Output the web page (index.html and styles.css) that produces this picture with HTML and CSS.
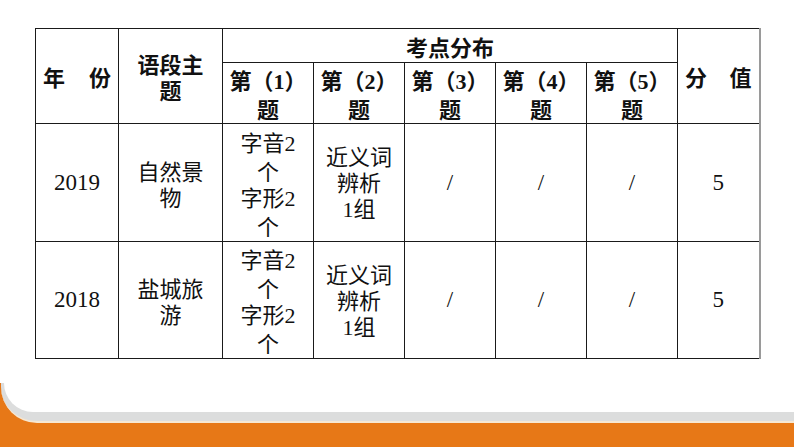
FILE: index.html
```html
<!DOCTYPE html>
<html lang="zh-CN">
<head>
<meta charset="utf-8">
<title>考点分布</title>
<link rel="stylesheet" href="styles.css">
</head>
<body>
<div class="page">
  <div class="sheet">
    <table class="grid">
      <colgroup>
        <col class="c-year"><col class="c-theme"><col class="c-q"><col class="c-q"><col class="c-q"><col class="c-q"><col class="c-q"><col class="c-score">
      </colgroup>
      <thead>
        <tr class="h1">
          <th rowspan="2"><span class="spread"><span>年</span><span>份</span></span></th>
          <th rowspan="2">语段主<br>题</th>
          <th colspan="5">考点分布</th>
          <th rowspan="2" class="last"><span class="spread"><span>分</span><span>值</span></span></th>
        </tr>
        <tr class="h2">
          <th>第（<b class="num">1</b>）<br>题</th>
          <th>第（<b class="num">2</b>）<br>题</th>
          <th>第（<b class="num">3</b>）<br>题</th>
          <th>第（<b class="num">4</b>）<br>题</th>
          <th>第（<b class="num">5</b>）<br>题</th>
        </tr>
      </thead>
      <tbody>
        <tr class="r1">
          <td class="num">2019</td>
          <td>自然景<br>物</td>
          <td>字音<span class="num">2</span><br>个<br>字形<span class="num">2</span><br>个</td>
          <td>近义词<br>辨析<br><span class="num">1</span>组</td>
          <td class="num">/</td>
          <td class="num">/</td>
          <td class="num">/</td>
          <td class="num last">5</td>
        </tr>
        <tr class="r2">
          <td class="num">2018</td>
          <td>盐城旅<br>游</td>
          <td>字音<span class="num">2</span><br>个<br>字形<span class="num">2</span><br>个</td>
          <td>近义词<br>辨析<br><span class="num">1</span>组</td>
          <td class="num">/</td>
          <td class="num">/</td>
          <td class="num">/</td>
          <td class="num last">5</td>
        </tr>
      </tbody>
    </table>
  </div>
  <div class="footer">
    <div class="band">
      <div class="cover"></div>
    </div>
  </div>
</div>
</body>
</html>
```
FILE: styles.css
```css
html, body {
  margin: 0;
  padding: 0;
  background: #ffffff;
}
.page {
  width: 794px;
  height: 447px;
  display: flex;
  flex-direction: column;
  overflow: hidden;
  background: #ffffff;
}
.sheet {
  padding: 28px 0 0 35px;
  flex: none;
}
.grid {
  border-collapse: collapse;
  table-layout: fixed;
  width: 724px;
  color: #111111;
  font-family: "Noto Sans CJK SC", "Liberation Sans", sans-serif;
  font-size: 22px;
  line-height: 26px;
}
.c-year { width: 83px; }
.c-theme { width: 104px; }
.c-q { width: 91px; }
.c-score { width: 82px; }
.grid th, .grid td {
  border: 1px solid #1a1a1a;
  padding: 0;
  text-align: center;
  vertical-align: middle;
}
.grid th {
  font-weight: 700;
}
.grid td {
  font-weight: 400;
}
.grid .last {
  border-right: 2px solid #9a9a9a;
}
.h1 { height: 34px; }
.h2 { height: 61px; }
.r1 { height: 118px; }
.r2 { height: 117px; }
.spread {
  display: flex;
  justify-content: space-between;
  padding: 0 7px;
}
.num {
  font-family: "Liberation Serif", serif;
}
b.num {
  font-weight: 700;
}
td.num {
  font-size: 23px;
}
.footer {
  margin-top: auto;
  height: 64px;
  flex: none;
  background: #e77817;
}
.band {
  height: 38px;
  margin-left: 1px;
  background: #dcdddd;
  border-bottom: 2px solid #f6e7d2;
  border-bottom-left-radius: 36px;
}
.cover {
  height: 29px;
  margin-left: 3px;
  background: #ffffff;
  border-bottom-left-radius: 30px;
}
```
